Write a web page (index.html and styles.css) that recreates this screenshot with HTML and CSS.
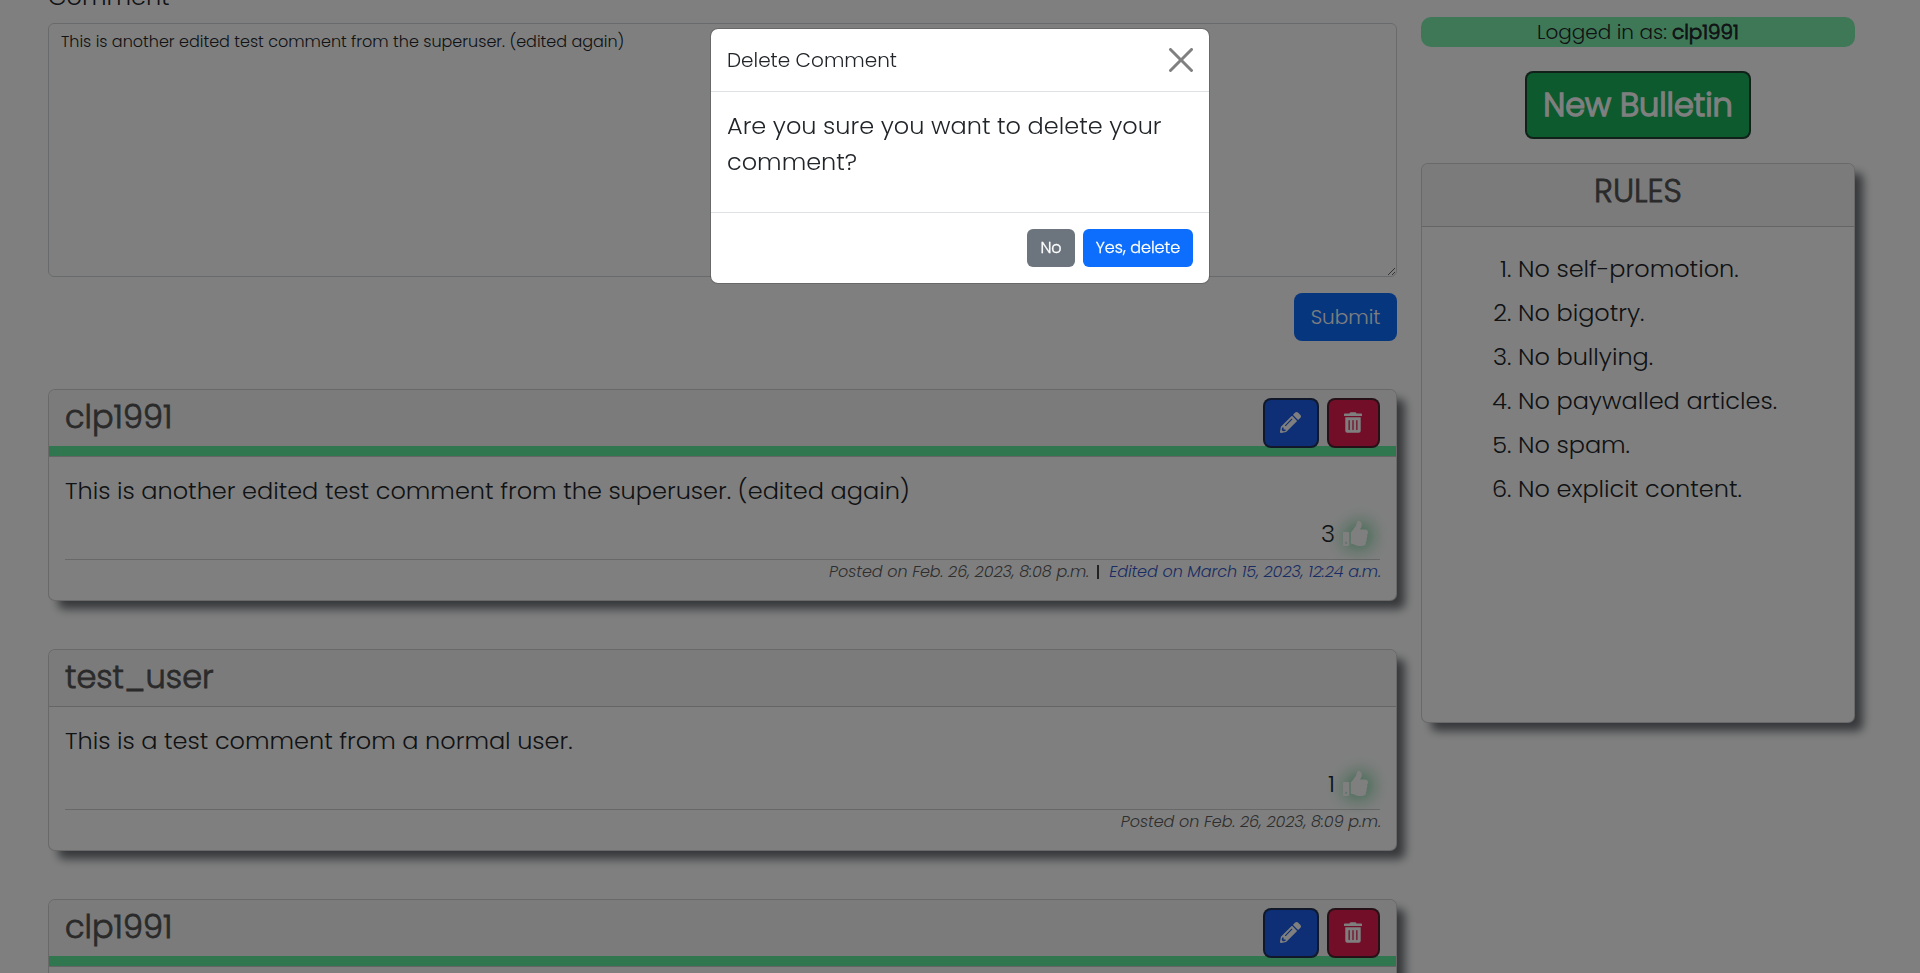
FILE: index.html
```html
<!DOCTYPE html>
<html lang="en">
<head>
<meta charset="utf-8">
<title>Delete Comment</title>
<link rel="stylesheet" href="styles.css">
</head>
<body>
<svg class="sprite" aria-hidden="true">
  <symbol id="pencil" viewBox="0 0 512 512"><path d="M497.9 142.1l-46.1 46.1c-4.7 4.7-12.3 4.7-17 0l-111-111c-4.7-4.7-4.7-12.3 0-17l46.1-46.1c18.7-18.7 49.1-18.7 67.9 0l60.1 60.1c18.8 18.7 18.8 49.1 0 67.9zM284.2 99.8L21.6 362.4.4 483.9c-2.9 16.4 11.4 30.6 27.8 27.8l121.5-21.3 262.6-262.6c4.7-4.7 4.7-12.3 0-17l-111-111c-4.8-4.7-12.4-4.7-17.1 0zM124.1 339.9c-5.5-5.5-5.5-14.3 0-19.8l154-154c5.5-5.5 14.3-5.5 19.8 0s5.5 14.3 0 19.8l-154 154c-5.5 5.5-14.3 5.5-19.8 0zM88 424h48v36.3l-64.5 11.3-31.1-31.1L51.7 376H88v48z"/></symbol>
  <symbol id="trash" viewBox="0 0 448 512"><path d="M32 464a48 48 0 0 0 48 48h288a48 48 0 0 0 48-48V128H32zm272-256a16 16 0 0 1 32 0v224a16 16 0 0 1-32 0zm-96 0a16 16 0 0 1 32 0v224a16 16 0 0 1-32 0zm-96 0a16 16 0 0 1 32 0v224a16 16 0 0 1-32 0zM432 32H312l-9.4-18.7A24 24 0 0 0 281.1 0H166.8a23.72 23.72 0 0 0-21.4 13.3L136 32H16A16 16 0 0 0 0 48v32a16 16 0 0 0 16 16h416a16 16 0 0 0 16-16V48a16 16 0 0 0-16-16z"/></symbol>
  <symbol id="thumb" viewBox="0 0 512 512"><path d="M104 224H24c-13.255 0-24 10.745-24 24v240c0 13.255 10.745 24 24 24h80c13.255 0 24-10.745 24-24V248c0-13.255-10.745-24-24-24zM64 472c-13.255 0-24-10.745-24-24s10.745-24 24-24 24 10.745 24 24-10.745 24-24 24zM384 81.452c0 42.416-25.97 66.208-33.277 94.548h101.723c33.397 0 59.397 27.746 59.553 58.098.084 17.938-7.546 37.249-19.439 49.197l-.11.11c9.836 23.337 8.237 56.037-9.308 79.469 8.681 25.895-.069 57.704-16.382 74.757 4.298 17.598 2.244 32.575-6.148 44.632C440.202 511.587 389.616 512 346.839 512l-2.845-.001c-48.287-.017-87.806-17.598-119.56-31.725-15.957-7.099-36.821-15.887-52.651-16.178-6.54-.12-11.783-5.457-11.783-11.998v-213.77c0-3.2 1.282-6.271 3.558-8.521 39.614-39.144 56.648-80.587 89.117-113.111 14.804-14.832 20.188-37.236 25.393-58.902C282.515 39.293 291.817 0 312 0c24 0 72 8 72 81.452z"/></symbol>
</svg>

<div class="page">
  <main class="main">
    <form class="form">
      <label class="label" for="comment">Comment</label>
      <textarea class="textarea" id="comment">This is another edited test comment from the superuser. (edited again)</textarea>
      <button class="submit" type="button">Submit</button>
    </form>

    <article class="card">
      <header class="card-head own">
        <h2 class="name">clp1991</h2>
        <div class="actions">
          <button class="act edit" type="button"><svg class="ico"><use href="#pencil"/></svg></button>
          <button class="act del" type="button"><svg class="ico bin"><use href="#trash"/></svg></button>
        </div>
      </header>
      <div class="card-body">
        <p>This is another edited test comment from the superuser. (edited again)</p>
        <div class="likes"><span class="count">3</span><svg class="like"><use href="#thumb"/></svg></div>
        <footer class="meta"><i class="posted">Posted on Feb. 26, 2023, 8:08 p.m.</i><span class="bar"></span><i class="edited">Edited on March 15, 2023, 12:24 a.m.</i></footer>
      </div>
    </article>

    <article class="card">
      <header class="card-head">
        <h2 class="name">test_user</h2>
      </header>
      <div class="card-body">
        <p>This is a test comment from a normal user.</p>
        <div class="likes"><span class="count">1</span><svg class="like"><use href="#thumb"/></svg></div>
        <footer class="meta"><i class="posted">Posted on Feb. 26, 2023, 8:09 p.m.</i></footer>
      </div>
    </article>

    <article class="card last">
      <header class="card-head own">
        <h2 class="name">clp1991</h2>
        <div class="actions">
          <button class="act edit" type="button"><svg class="ico"><use href="#pencil"/></svg></button>
          <button class="act del" type="button"><svg class="ico bin"><use href="#trash"/></svg></button>
        </div>
      </header>
    </article>
  </main>

  <aside class="side">
    <div class="badge"><span>Logged in as:</span><b class="who">clp1991</b></div>
    <button class="new" type="button">New Bulletin</button>
    <section class="card rules">
      <header class="card-head rules-head"><h2 class="name">RULES</h2></header>
      <ol class="list">
        <li>No self-promotion.</li>
        <li>No bigotry.</li>
        <li>No bullying.</li>
        <li>No paywalled articles.</li>
        <li>No spam.</li>
        <li>No explicit content.</li>
      </ol>
    </section>
  </aside>
</div>

<div class="backdrop">
  <div class="modal" role="dialog">
    <header class="modal-head">
      <h5 class="modal-title">Delete Comment</h5>
      <svg class="close" viewBox="0 0 16 16"><path d="M.293.293a1 1 0 0 1 1.414 0L8 6.586 14.293.293a1 1 0 1 1 1.414 1.414L9.414 8l6.293 6.293a1 1 0 0 1-1.414 1.414L8 9.414l-6.293 6.293a1 1 0 0 1-1.414-1.414L6.586 8 .293 1.707a1 1 0 0 1 0-1.414z"/></svg>
    </header>
    <div class="modal-body">
      <p>Are you sure you want to delete your comment?</p>
    </div>
    <footer class="modal-foot">
      <button class="btn no" type="button">No</button>
      <button class="btn yes" type="button">Yes, delete</button>
    </footer>
  </div>
</div>
</body>
</html>
```
FILE: styles.css
```css
* { box-sizing: border-box; margin: 0; padding: 0; }

html, body { height: 973px; overflow: hidden; }

body {
  background: #fff;
  color: #212529;
  font-family: Poppins, Inter, sans-serif;
  font-size: 24px;
  font-weight: 300;
  line-height: 36px;
}

button, textarea, h2, h5 {
  font-family: inherit;
  font-weight: inherit;
}

.sprite { display: none; }

.page {
  display: grid;
  grid-template-columns: 1349px 434px;
  column-gap: 24px;
  height: 973px;
  padding-left: 48px;
  overflow: hidden;
}

.main { margin-top: -21px; }

/* comment form */
.form { display: flex; flex-direction: column; margin-bottom: 48px; }
.label { margin-bottom: 8px; }
.textarea {
  width: 100%;
  height: 254px;
  padding: 6px 12px;
  border: 1px solid #d2d4d6;
  border-radius: 6px;
  background: #fff;
  color: #212529;
  font-size: 16px;
  line-height: 24px;
  resize: vertical;
}
.submit {
  align-self: flex-end;
  width: 103px;
  height: 48px;
  margin-top: 16px;
  border: 0;
  border-radius: 8px;
  background: #0d6efd;
  color: #fff;
  font-size: 20px;
}

/* cards */
.card {
  margin-bottom: 48px;
  border: 1px solid rgba(0, 0, 0, .175);
  border-radius: 7px;
  background: #fff;
  box-shadow: 9px 9px 10px -1px #6c7176;
}
.card-head {
  display: flex;
  justify-content: space-between;
  height: 57px;
  padding: 8px 16px 0;
  border-bottom: 1px solid rgba(0, 0, 0, .175);
  border-radius: 6px 6px 0 0;
  background: #f7f7f7;
}
.own { height: 67px; background: linear-gradient(#f7f7f7 56px, #60ee9f 56px); }
.name {
  color: #555;
  font-size: 32px;
  line-height: 38.4px;
  -webkit-text-stroke: .8px #555;
}

.actions { display: flex; gap: 8px; }
.act {
  display: flex;
  align-items: center;
  justify-content: center;
  height: 50px;
  padding: 0 1px 1px 0;
  border: 2px solid rgba(33, 37, 41, .78);
  border-radius: 8px;
  color: #fff;
}
.edit { width: 56px; background: #1c5eea; }
.del { width: 53px; background: #e61c50; }
.ico { width: 21px; height: 21px; fill: currentColor; }
.bin { width: 18px; }

.card-body { padding: 16px; }
.last { height: 200px; }
.likes {
  display: flex;
  align-items: center;
  justify-content: flex-end;
  gap: 8px;
  height: 36px;
  margin: 6px 0 8px;
  padding-right: 12px;
}
.count { padding-top: 2px; }
.like {
  width: 25px;
  height: 25px;
  fill: #fff;
  overflow: visible;
  filter: drop-shadow(2px 0 10px #18b45c);
}
.meta {
  display: flex;
  align-items: center;
  justify-content: flex-end;
  height: 25px;
  border-top: 1px solid #d0d0d0;
  font-size: 16px;
  line-height: 24px;
  letter-spacing: -.06px;
}
.meta i:last-child { margin-right: -1px; }
.posted { color: #5c5c5c; }
.bar { width: 2px; height: 14px; margin: 0 10px 0 8px; background: #444; }
.edited { color: #3358c8; }

/* sidebar */
.side { display: flex; flex-direction: column; align-items: center; padding-top: 17px; }
.badge {
  display: flex;
  justify-content: center;
  gap: 5px;
  width: 100%;
  height: 30px;
  border-radius: 10px;
  background: #7ff0af;
  font-size: 20px;
  line-height: 30px;
}
.who { font-weight: 300; -webkit-text-stroke: .8px #212529; }
.new {
  width: 226px;
  height: 68px;
  margin: 24px 0;
  border: 2px solid rgba(33, 37, 41, .8);
  border-radius: 8px;
  background: #18b45c;
  color: #fff;
  font-size: 32px;
  -webkit-text-stroke: 1.4px #fff;
}
.rules { width: 100%; height: 560px; }
.rules-head { justify-content: center; height: 63px; }
.list { padding: 24px 0 0 96px; }
.list li { margin-bottom: 8px; }

/* dialog */
.backdrop {
  position: fixed;
  inset: 0;
  padding-top: 28px;
  background: rgba(0, 0, 0, .5);
}
.modal {
  width: 500px;
  height: 256px;
  margin: 0 auto;
  border: 1px solid rgba(0, 0, 0, .175);
  border-radius: 8px;
  background: #fff;
  background-clip: padding-box;
}
.modal-head {
  display: flex;
  align-items: center;
  justify-content: space-between;
  height: 63px;
  padding: 0 16px;
  border-bottom: 1px solid #dee2e6;
}
.modal-title { font-size: 20px; line-height: 30px; }
.close { width: 24px; height: 24px; fill: #808080; }
.modal-body { height: 120px; padding: 16px; }
.modal-foot {
  display: flex;
  justify-content: flex-end;
  gap: 8px;
  padding: 16px;
  border-top: 1px solid #dee2e6;
}
.btn {
  height: 38px;
  border: 0;
  border-radius: 6px;
  color: #fff;
  font-size: 16px;
  line-height: 24px;
  -webkit-text-stroke: .3px #fff;
}
.no { width: 48px; background: #6c757d; }
.yes { width: 110px; background: #0d6efd; }
```
